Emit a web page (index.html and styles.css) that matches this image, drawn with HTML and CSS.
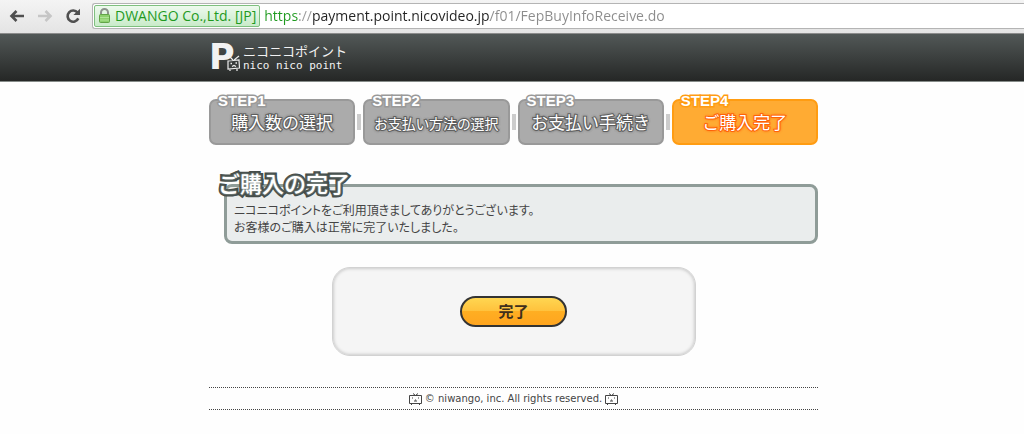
FILE: index.html
```html
<!DOCTYPE html>
<html lang="ja">
<head>
    <meta charset="UTF-8">
    <meta name="viewport" content="width=device-width, initial-scale=1.0">
    <title>ニコニコポイント</title>
    <link rel="stylesheet" href="styles.css">
</head>
<body>
    <div class="browser-bar">
        <button class="nav-button" type="button" aria-label="Back">
            <svg width="18" height="16" viewBox="0 0 18 16"><path d="M16 8H4M8.500 3L3.500 8L8.500 13" fill="none" stroke="#505050" stroke-width="2.600"/></svg>
        </button>
        <button class="nav-button" type="button" aria-label="Forward" disabled>
            <svg width="18" height="16" viewBox="0 0 18 16"><path d="M2 8H14M9.500 3L14.500 8L9.500 13" fill="none" stroke="#c6c6c6" stroke-width="2.600"/></svg>
        </button>
        <button class="nav-button" type="button" aria-label="Reload">
            <svg width="18" height="16" viewBox="0 0 18 16"><path d="M13.600 4.600A5.600 5.600 0 1 0 14.300 10.400" fill="none" stroke="#505050" stroke-width="2.600"/><path d="M16 .8V7H9.400z" fill="#505050"/></svg>
        </button>
        <div class="address">
            <span class="certificate">
                <svg width="13" height="16" viewBox="0 0 13 16"><path d="M3 8V4.500a3.500 3.500 0 0 1 7 0V8" fill="none" stroke="#8d938d" stroke-width="2"/><rect x="1.500" y="6.500" width="10" height="8" rx="1" fill="#8cd06d" stroke="#62a548"/><path d="M2 9.500h9M2 12h9" stroke="#b0e398"/></svg>
                DWANGO Co.,Ltd. [JP]
            </span>
            <input class="url" type="text" aria-label="URL" value="https://payment.point.nicovideo.jp/f01/FepBuyInfoReceive.do">
        </div>
    </div>

    <header class="site-header">
        <div class="container">
            <a class="logo" href="#">
                <span class="logo-mark">P<svg class="logo-tv" width="15" height="16" viewBox="0 0 15 16"><path d="M2 6L13 5L13.500 13L2 14zM7 5L4 2M8 5L13 1M4 14v2M11 14v2" fill="#393d3c" stroke="#eee" stroke-width="1.200"/><path d="M4.500 8.500h1.500M9.500 8h1.500M6 11.500L8 10.500L10 11.500" fill="none" stroke="#eee" stroke-width="1.300"/></svg></span>
                <span class="logo-text">
                    <span class="logo-kana">ニコニコポイント</span>
                    <span class="logo-latin">nico nico point</span>
                </span>
            </a>
        </div>
    </header>

    <main class="container">
        <ol class="steps">
            <li class="step"><span class="step-number">STEP1</span><span class="step-name">購入数の選択</span></li>
            <li class="step"><span class="step-number">STEP2</span><span class="step-name step-name-long">お支払い方法の選択</span></li>
            <li class="step"><span class="step-number">STEP3</span><span class="step-name">お支払い手続き</span></li>
            <li class="step current" aria-current="step"><span class="step-number">STEP4</span><span class="step-name">ご購入完了</span></li>
        </ol>

        <section class="message">
            <h1>ご購入の完了</h1>
            <p>ニコニコポイントをご利用頂きましてありがとうございます。<br>お客様のご購入は正常に完了いたしました。</p>
        </section>

        <form class="finish">
            <button class="finish-button" type="button">完了</button>
        </form>

        <footer class="site-footer">
            <svg width="13" height="12" viewBox="0 0 13 12"><path d="M.5 2.500h12v8H.5zM6.500 2.500L4 .5M6.500 2.500L9 .5M2.500 11v1M10.500 11v1" fill="none" stroke="#444"/><path d="M3 5h1M9 5h1M5 8h3M6 7h1" stroke="#444"/></svg>
            <span>© niwango, inc. All rights reserved.</span>
            <svg width="13" height="12" viewBox="0 0 13 12"><path d="M.5 2.500h12v8H.5zM6.500 2.500L4 .5M6.500 2.500L9 .5M2.500 11v1M10.500 11v1" fill="none" stroke="#444"/><path d="M3 5h1M9 5h1M5 8h3M6 7h1" stroke="#444"/></svg>
        </footer>
    </main>
</body>
</html>
```

FILE: styles.css
```css
* {
    box-sizing: border-box;
}

body {
    margin: 0;
    background: #fefefe;
    color: #444;
    font-family: "Liberation Sans", "Noto Sans CJK JP", sans-serif;
}

button {
    font-family: inherit;
    cursor: pointer;
}

.container {
    max-width: 612px;
    margin: 0 auto;
    padding-left: 3px;
}

/* Browser bar */

.browser-bar {
    display: flex;
    align-items: center;
    gap: 10px;
    height: 34px;
    padding: 0 0 2px 8px;
    background: linear-gradient(#f4f4f4, #e4e4e4);
    border-bottom: 1px solid #8c8c8c;
    font-family: "Open Sans", "Noto Sans", sans-serif;
    font-size: 14px;
}

.nav-button {
    display: flex;
    padding: 0;
    border: none;
    background: none;
}

.address {
    display: flex;
    flex: 1;
    align-items: center;
    height: 26px;
    padding-left: 1px;
    background: #fff;
    border: 1px solid #b4b4b4;
    border-right: none;
    border-radius: 3px 0 0 3px;
}

.certificate {
    display: flex;
    flex-shrink: 0;
    align-items: center;
    gap: 4px;
    height: 22px;
    padding: 0 3px;
    background: linear-gradient(#eefaee, #c9ebc9);
    border: 1px solid #7fc07f;
    border-radius: 2px;
    color: #1f9a1f;
}

.url {
    flex: 1;
    min-width: 0;
    height: 24px;
    margin-left: 4px;
    padding: 0;
    border: none;
    outline: none;
    font: inherit;
    /* scheme, slashes, host and path each get their own colour */
    background: linear-gradient(90deg, #1f9a1f 34px, #999 34px 48px, #222 48px 226px, #8c8c8c 226px);
    -webkit-background-clip: text;
    background-clip: text;
    -webkit-text-fill-color: transparent;
}

/* Site header */

.site-header {
    height: 48px;
    background: linear-gradient(#525857, #252726);
    border-bottom: 1px solid #868c89;
}

.logo {
    display: flex;
    align-items: center;
    height: 46px;
    color: #f2f2f2;
    text-decoration: none;
}

.logo-mark {
    position: relative;
    width: 34px;
    font: bold 35px/32px "DejaVu Sans", sans-serif;
}

.logo-tv {
    position: absolute;
    right: 2px;
    bottom: 2px;
}

.logo-text {
    display: flex;
    flex-direction: column;
}

.logo-kana {
    font: 13px/18px "Noto Sans CJK JP", sans-serif;
}

.logo-latin {
    font: 11px/12px "DejaVu Sans Mono", monospace;
}

/* Steps */

.steps {
    display: grid;
    grid-template-columns: repeat(4, 1fr);
    gap: 8px;
    margin: 17px 0 39px;
    padding: 0;
    list-style: none;
}

.step {
    position: relative;
    display: flex;
    justify-content: center;
    align-items: center;
    height: 46px;
    padding-top: 3px;
    background: #ababab;
    border: 2px solid #999;
    border-radius: 7px;
    color: #fff;
}

.step + .step::before {
    content: "";
    position: absolute;
    top: 13px;
    left: -8px;
    width: 4px;
    height: 16px;
    background: #ccc;
}

.step-number {
    position: absolute;
    top: -8px;
    left: 7px;
    font-size: 15px;
    font-weight: bold;
    line-height: 16px;
    -webkit-text-stroke: 3px #999;
    paint-order: stroke fill;
}

.step-name {
    font-size: 17px;
    line-height: 24px;
    white-space: nowrap;
    -webkit-text-stroke: 2px #666;
    paint-order: stroke fill;
    text-shadow: 0 0 3px #555, 0 0 3px #555;
}

.step-name-long {
    font-size: 14px;
    font-feature-settings: "palt";
}

.current {
    background: #ffab33;
    border-color: #ff9c12;
}

.current .step-number {
    -webkit-text-stroke-color: #ff9c12;
}

.current .step-name {
    -webkit-text-stroke-color: #ff6a10;
    text-shadow: 0 0 3px #ff5a00, 0 0 3px #ff5a00;
}

/* Message */

.message {
    position: relative;
    margin-left: 15px;
    padding: 16px 7px 4px;
    background: #eaeded;
    border: 3px solid #8f9c98;
    border-radius: 8px;
}

.message h1 {
    position: absolute;
    top: -18px;
    left: -9px;
    margin: 0;
    color: #fff;
    font-size: 22px;
    font-weight: 500;
    line-height: 32px;
    white-space: nowrap;
    -webkit-text-stroke: 5px #444c49;
    paint-order: stroke fill;
    text-shadow: 0 0 2px #8f9c98, 0 0 2px #8f9c98;
}

.message p {
    margin: 0;
    font-size: 12px;
    line-height: 17px;
    font-feature-settings: "palt";
}

/* Finish */

.finish {
    display: flex;
    justify-content: center;
    align-items: center;
    max-width: 364px;
    height: 89px;
    margin: 23px auto 31px;
    background: #f5f5f5;
    border: 1px solid #d2d2d2;
    border-radius: 18px;
    box-shadow: inset 0 0 3px 1px #ccc;
}

.finish-button {
    width: 107px;
    height: 31px;
    padding: 0;
    background: linear-gradient(#ffd651, #ffc13c 50%, #ffae22 50%, #ffa51f);
    border: 2px solid #333;
    border-radius: 16px;
    color: #3f301c;
    font-size: 15px;
    font-weight: bold;
    line-height: 24px;
}

/* Footer */

.site-footer {
    display: flex;
    justify-content: center;
    align-items: center;
    gap: 3px;
    height: 23px;
    border-top: 1px dotted #444;
    border-bottom: 1px dotted #444;
    font: 10px/14px "DejaVu Sans", sans-serif;
}
```
